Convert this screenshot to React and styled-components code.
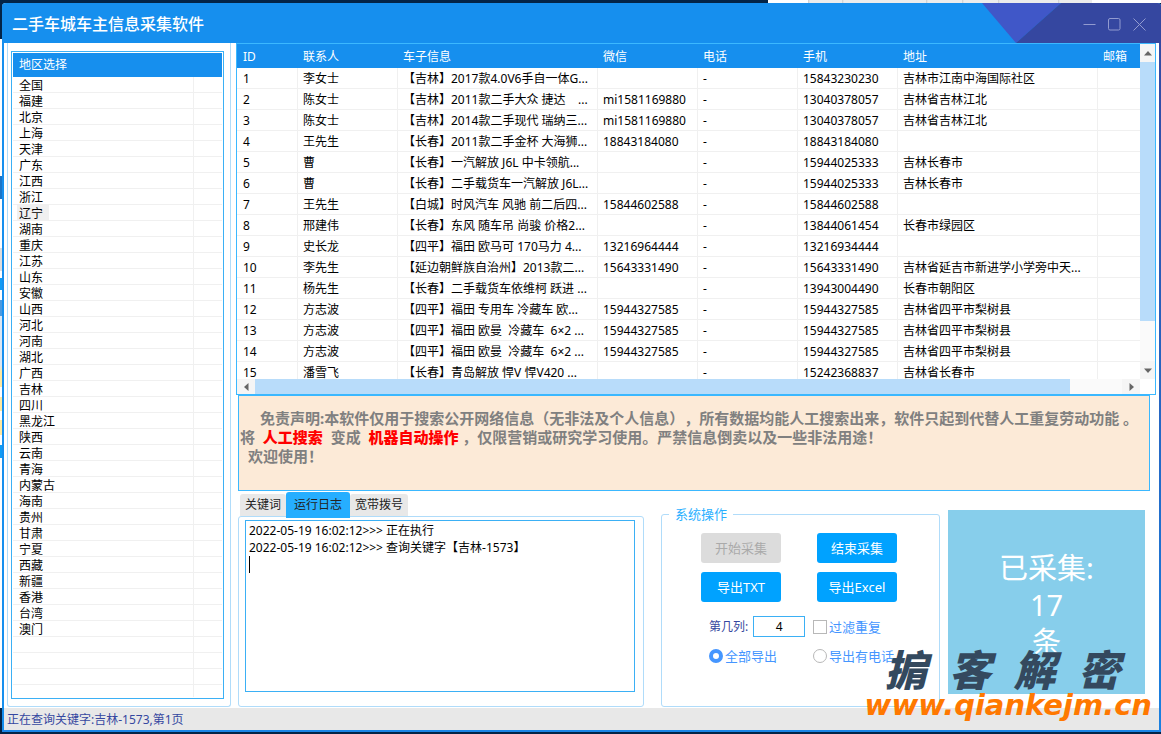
import React from "react";
import styled, { createGlobalStyle, css } from "styled-components";

const regions = [
  "全国", "福建", "北京", "上海", "天津", "广东", "江西", "浙江", "辽宁",
  "湖南", "重庆", "江苏", "山东", "安徽", "山西", "河北", "河南", "湖北",
  "广西", "吉林", "四川", "黑龙江", "陕西", "云南", "青海", "内蒙古", "海南",
  "贵州", "甘肃", "宁夏", "西藏", "新疆", "香港", "台湾", "澳门",
  "", "", "", "",
];

const columns = [
  { title: "ID", width: 61 },
  { title: "联系人", width: 100 },
  { title: "车子信息", width: 200 },
  { title: "微信", width: 100 },
  { title: "电话", width: 100 },
  { title: "手机", width: 100 },
  { title: "地址", width: 200 },
  { title: "邮箱" },
];

const rows = [
  ["1", "李女士", "【吉林】2017款4.0V6手自一体G...", "", "-", "15843230230", "吉林市江南中海国际社区"],
  ["2", "陈女士", "【吉林】2011款二手大众 捷达    ...", "mi1581169880", "-", "13040378057", "吉林省吉林江北"],
  ["3", "陈女士", "【吉林】2014款二手现代 瑞纳三...", "mi1581169880", "-", "13040378057", "吉林省吉林江北"],
  ["4", "王先生", "【长春】2011款二手金杯 大海狮...", "18843184080", "-", "18843184080", ""],
  ["5", "曹", "【长春】一汽解放 J6L 中卡领航...", "", "-", "15944025333", "吉林长春市"],
  ["6", "曹", "【长春】二手载货车一汽解放 J6L...", "", "-", "15944025333", "吉林长春市"],
  ["7", "王先生", "【白城】时风汽车 风驰 前二后四...", "15844602588", "-", "15844602588", ""],
  ["8", "邢建伟", "【长春】东风 随车吊 尚骏 价格2...", "", "-", "13844061454", "长春市绿园区"],
  ["9", "史长龙", "【四平】福田 欧马可 170马力 4...", "13216964444", "-", "13216934444", ""],
  ["10", "李先生", "【延边朝鲜族自治州】2013款二...", "15643331490", "-", "15643331490", "吉林省延吉市新进学小学旁中天..."],
  ["11", "杨先生", "【长春】二手载货车依维柯 跃进 ...", "", "-", "13943004490", "长春市朝阳区"],
  ["12", "方志波", "【四平】福田 专用车 冷藏车 欧...", "15944327585", "-", "15944327585", "吉林省四平市梨树县"],
  ["13", "方志波", "【四平】福田 欧曼  冷藏车  6×2 ...", "15944327585", "-", "15944327585", "吉林省四平市梨树县"],
  ["14", "方志波", "【四平】福田 欧曼  冷藏车  6×2 ...", "15944327585", "-", "15944327585", "吉林省四平市梨树县"],
  ["15", "潘雪飞", "【长春】青岛解放 悍V 悍V420 ...", "", "-", "15242368837", "吉林省长春市"],
];

const log =
  "2022-05-19 16:02:12>>> 正在执行\n2022-05-19 16:02:12>>> 查询关键字【吉林-1573】\n";

const App = () => {
  return (
    <Desktop>
      <GlobalStyle />
      <Window>
        <TitleBar>
          <TitleArt viewBox="0 0 179 40" aria-hidden="true">
            <polygon points="0,0 79,0 34,40" fill="#4057c8" />
            <polygon points="79,0 179,0 179,40 34,40" fill="#3547a0" />
          </TitleArt>
          <Title>二手车城车主信息采集软件</Title>
          <Controls>
            <ControlButton aria-label="最小化">
              <svg width="13" height="13" viewBox="0 0 13 13">
                <path d="M0.5 6.5H12.5" />
              </svg>
            </ControlButton>
            <ControlButton aria-label="最大化">
              <svg width="13" height="13" viewBox="0 0 13 13">
                <rect x="0.5" y="0.5" width="11.5" height="11.5" rx="1.5" />
              </svg>
            </ControlButton>
            <ControlButton aria-label="关闭">
              <svg width="13" height="13" viewBox="0 0 13 13">
                <path d="M0.5 0.5L12.5 12.5M12.5 0.5L0.5 12.5" />
              </svg>
            </ControlButton>
          </Controls>
        </TitleBar>

        <Content>
          <Sidebar>
            <RegionBox>
              <RegionHeader>地区选择</RegionHeader>
              <RegionList>
                {regions.map((name, i) => (
                  <RegionRow key={i}>
                    <RegionCell>
                      {name && (
                        <RegionName $active={name === "辽宁"}>{name}</RegionName>
                      )}
                    </RegionCell>
                  </RegionRow>
                ))}
              </RegionList>
            </RegionBox>
          </Sidebar>

          <Main>
            <GridBox>
              <GridView>
                <Table>
                  <colgroup>
                    {columns.map((c) => (
                      <col key={c.title} width={c.width} />
                    ))}
                  </colgroup>
                  <thead>
                    <tr>
                      {columns.map((c) => (
                        <Th key={c.title}>{c.title}</Th>
                      ))}
                    </tr>
                  </thead>
                  <tbody>
                    {rows.map((row) => (
                      <tr key={row[0]}>
                        {row.map((cell, i) => (
                          <Td key={i}>{cell}</Td>
                        ))}
                        <Td />
                      </tr>
                    ))}
                  </tbody>
                </Table>
              </GridView>
              <ScrollTrack $vertical>
                <ScrollArrow $vertical>
                  <svg width="8" height="5" viewBox="0 0 8 5">
                    <path d="M4 0L8 4.5H0Z" />
                  </svg>
                </ScrollArrow>
                <ScrollThumb $size={259} />
                <ScrollRest $size={40} />
                <ScrollArrow $vertical>
                  <svg width="8" height="5" viewBox="0 0 8 5">
                    <path d="M4 5L8 0.5H0Z" />
                  </svg>
                </ScrollArrow>
              </ScrollTrack>
              <ScrollTrack>
                <ScrollArrow>
                  <svg width="5" height="8" viewBox="0 0 5 8">
                    <path d="M0 4L4.5 0V8Z" />
                  </svg>
                </ScrollArrow>
                <ScrollThumb $size={815} />
                <ScrollRest $size={52} />
                <ScrollArrow>
                  <svg width="5" height="8" viewBox="0 0 5 8">
                    <path d="M5 4L0.5 0V8Z" />
                  </svg>
                </ScrollArrow>
              </ScrollTrack>
            </GridBox>

            <Notice>
              <NoticeLine $indent={20}>
                免责声明:本软件仅用于搜索公开网络信息（无非法及个人信息），所有数据均能人工搜索出来，软件只起到代替人工重复劳动功能 。
              </NoticeLine>
              <NoticeLine>
                {"将  "}
                <strong>人工搜索</strong>
                {"  变成  "}
                <strong>机器自动操作</strong>
                {" ，仅限营销或研究学习使用。严禁信息倒卖以及一些非法用途！"}
              </NoticeLine>
              <NoticeLine $indent={8}>欢迎使用！</NoticeLine>
            </Notice>

            <Bottom>
              <TabArea>
                <TabStrip role="tablist">
                  <Tab role="tab">关键词</Tab>
                  <Tab role="tab" $active aria-selected="true">
                    运行日志
                  </Tab>
                  <Tab role="tab">宽带拨号</Tab>
                </TabStrip>
                <TabPanel>
                  <LogWrap>
                    <Log aria-label="运行日志" defaultValue={log} spellCheck={false} />
                    <Caret />
                  </LogWrap>
                </TabPanel>
              </TabArea>

              <Group>
                <legend>系统操作</legend>
                <ButtonGrid>
                  <ActionButton disabled>开始采集</ActionButton>
                  <ActionButton>结束采集</ActionButton>
                  <ActionButton>导出TXT</ActionButton>
                  <ActionButton>导出Excel</ActionButton>
                </ButtonGrid>
                <Options>
                  <ColumnField>
                    <label htmlFor="column">第几列:</label>
                    <input id="column" type="text" defaultValue="4" />
                  </ColumnField>
                  <Option>
                    <Check type="checkbox" />
                    过滤重复
                  </Option>
                  <Option>
                    <Radio type="radio" name="scope" defaultChecked />
                    全部导出
                  </Option>
                  <Option>
                    <Radio type="radio" name="scope" />
                    导出有电话
                  </Option>
                </Options>
              </Group>

              <Counter>
                <div>已采集:</div>
                <div>17</div>
                <div>条</div>
              </Counter>
            </Bottom>
          </Main>
        </Content>

        <StatusBar>正在查询关键字:吉林-1573,第1页</StatusBar>
      </Window>

      <Watermark>
        <WatermarkName>
          <span>掮</span>
          <span>客</span>
          <span>解</span>
          <span>密</span>
        </WatermarkName>
        <WatermarkSite>www.qiankejm.cn</WatermarkSite>
      </Watermark>
    </Desktop>
  );
};

export default App;

const GlobalStyle = createGlobalStyle`
  * {
    box-sizing: border-box;
  }
  body {
    margin: 0;
    background: #032447;
    color: #000;
    font-family: "Noto Sans", "Noto Sans CJK SC", sans-serif;
    font-size: 12px;
    line-height: 16px;
    text-spacing-trim: space-all;
  }
  button, input, textarea {
    font: inherit;
    margin: 0;
  }
`;

/* slivers of other windows show round the edges */
const Desktop = styled.div`
  position: relative;
  display: flex;
  height: 100vh;
  min-height: 640px;
  padding: 3px 0 2px 2px;
  background:
    linear-gradient(
        90deg,
        #032447 768px, #fff 768px, #fff 808px,
        #ccc 808px, #ececec 810px, #ececec 842px,
        #ccc 842px, #ececec 844px, #ececec 926px,
        #ccc 926px, #ececec 928px, #ececec 962px,
        #ccc 962px, #ececec 964px, #ececec 998px,
        #ccc 998px, #ececec 1000px, #ececec 1058px,
        #ccc 1058px, #ececec 1060px, #ececec 1092px,
        #fff 1092px
      )
      top / 100% 3px no-repeat,
    linear-gradient(
        #032447 39px, #fff 39px, #fff 176px,
        #1a75c8 176px, #1a75c8 199px, #fff 199px, #fff 248px,
        #ddd 248px, #ddd 271px, #fff 271px, #fff 278px,
        #0f9cf5 278px, #0f9cf5 290px, #fff 290px, #fff 300px,
        #4a9ae0 300px, #4a9ae0 316px, #dbe8f4 316px, #dbe8f4 365px,
        #ffe9a0 372px, #ffe9a0 387px, #fff 387px, #fff 397px,
        #ffe9a0 397px, #ffe9a0 411px, #fff 411px, #fff 420px,
        #ffe9a0 420px, #ffe9a0 435px, #fff 435px, #fff 445px,
        #0f9cf5 445px, #0f9cf5 458px, #fff 458px, #fff 708px,
        #032447 708px
      )
      left / 5px 100% no-repeat,
    #032447;
`;

const Window = styled.div`
  flex: 1;
  min-width: 0;
  display: flex;
  flex-direction: column;
  overflow: hidden;
  border-radius: 4px 4px 0 0;
  border-bottom: 2px solid #1a85e6;
  background:
    linear-gradient(#3547a0, #1a80e0) right / 2px 100% no-repeat,
    linear-gradient(#168fee, #168fee) left / 2px 100% no-repeat,
    #fff;
`;

const TitleBar = styled.header`
  position: relative;
  flex: none;
  display: flex;
  align-items: center;
  justify-content: space-between;
  height: 40px;
  padding: 2px 9px 0 10px;
  background: #168fee;
`;

const TitleArt = styled.svg`
  position: absolute;
  top: 0;
  right: 0;
  width: 179px;
  height: 40px;
`;

const Title = styled.h1`
  margin: 0;
  font-size: 16px;
  line-height: 24px;
  font-weight: 500;
  color: #fff;
`;

const Controls = styled.div`
  position: relative;
  display: flex;
`;

const ControlButton = styled.button`
  display: flex;
  align-items: center;
  justify-content: center;
  width: 25px;
  height: 25px;
  padding: 0;
  border: 0;
  background: none;

  svg {
    fill: none;
    stroke: #929bd0;
    stroke-width: 1;
  }
`;

const Content = styled.div`
  flex: 1;
  min-height: 0;
  display: flex;
  gap: 5px;
  padding: 0 5px;
`;

const Sidebar = styled.aside`
  flex: none;
  display: flex;
  width: 224px;
  margin-bottom: 1px;
  padding: 8px 6px 7px 3px;
  border: 1px solid #b0dcfa;
  border-top: 0;
  border-radius: 0 0 3px 3px;
`;

const RegionBox = styled.div`
  flex: 1;
  display: flex;
  flex-direction: column;
  padding: 1px;
  border: 1px solid #3bb0f5;
`;

const RegionHeader = styled.div`
  flex: none;
  padding: 0 6px;
  line-height: 24px;
  background: #168fee;
  color: #fff;
`;

const RegionList = styled.ul`
  flex: 1;
  min-height: 0;
  margin: 0;
  padding: 0;
  overflow: hidden;
  list-style: none;
`;

const RegionRow = styled.li`
  height: 16px;
  border-bottom: 1px solid #f0f0f0;
`;

const RegionCell = styled.div`
  display: flex;
  width: 181px;
  height: 16px;
  padding-left: 4px;
  border-right: 1px solid #f0f0f0;
`;

const RegionName = styled.span`
  padding: 0 6px 0 2px;
  line-height: 18px;
  background: ${(p) => (p.$active ? "#f0f0f0" : "none")};
`;

const Main = styled.main`
  flex: 1;
  min-width: 0;
  display: flex;
  flex-direction: column;
`;

const GridBox = styled.div`
  flex: 1;
  min-height: 0;
  display: grid;
  grid-template-columns: minmax(0, 1fr) 15px;
  grid-template-rows: minmax(0, 1fr) 15px;
  border: 1px solid #3bb8ff;
`;

const GridView = styled.div`
  min-height: 0;
  overflow: hidden;
`;

const Table = styled.table`
  width: 100%;
  table-layout: fixed;
  border-collapse: separate;
  border-spacing: 0;
`;

const cell = css`
  overflow: hidden;
  padding: 2px 0 0 5px;
  text-align: left;
  white-space: pre;

  &:first-child {
    padding-left: 6px;
  }
`;

const Th = styled.th`
  ${cell}
  height: 24px;
  font-weight: 400;
  background: #168fee;
  color: #fff;
`;

const Td = styled.td`
  ${cell}
  height: 21px;
  border-right: 1px solid #f0f0f0;
  border-bottom: 1px solid #f0f0f0;

  &:last-child {
    border-right: 0;
  }
`;

const ScrollTrack = styled.div`
  display: flex;
  min-width: 0;
  min-height: 0;
  flex-direction: ${(p) => (p.$vertical ? "column" : "row")};
  background: #fafafa;
`;

const ScrollArrow = styled.div`
  flex: none;
  display: flex;
  align-items: center;
  justify-content: center;
  width: ${(p) => (p.$vertical ? "15px" : "18px")};
  height: ${(p) => (p.$vertical ? "18px" : "15px")};
  background: #f5f5f5;

  svg {
    fill: #666;
  }
`;

const ScrollThumb = styled.div`
  flex: ${(p) => p.$size} 1 0;
  background: #b8dcfa;
`;

const ScrollRest = styled.div`
  flex: ${(p) => p.$size} 1 0;
`;

const Notice = styled.section`
  flex: none;
  min-height: 96px;
  margin: 0 6px 0 2px;
  padding: 13px 1px;
  border: 1px solid #3bb8ff;
  background: #fcead7;
  color: #808080;
  font-size: 15px;
  line-height: 19px;
  font-weight: 700;
`;

const NoticeLine = styled.p`
  margin: 0;
  padding-left: ${(p) => p.$indent || 0}px;
  white-space: pre-wrap;

  strong {
    color: #f00;
  }
`;

const Bottom = styled.div`
  flex: none;
  display: grid;
  grid-template-columns: minmax(0, 1fr) 279px 205px;
  height: 217px;
  padding: 1px 11px 1px 2px;
`;

const TabArea = styled.section`
  display: flex;
  flex-direction: column;
  margin-right: 17px;
`;

const TabStrip = styled.div`
  display: flex;
  align-items: flex-end;
  height: 24px;
  padding-left: 2px;
`;

const Tab = styled.button`
  height: 22px;
  padding: 0 5px;
  border: 0;
  border-radius: 3px 3px 0 0;
  background: #e8e8e8;
  color: #222;

  ${(p) =>
    p.$active &&
    css`
      position: relative;
      height: 26px;
      margin-bottom: -2px;
      padding: 0 8px;
      background: #26aeff;
    `}
`;

const TabPanel = styled.div`
  flex: 1;
  display: flex;
  padding: 3px 8px 14px 6px;
  border: 1px solid #b0dcfa;
  border-radius: 3px;
`;

const LogWrap = styled.div`
  position: relative;
  flex: 1;
  display: flex;
`;

const Log = styled.textarea`
  flex: 1;
  min-width: 0;
  padding: 1px 3px;
  border: 1px solid #3bb0f5;
  outline: 0;
  resize: none;
  line-height: 17px;
  color: #000;
`;

const Caret = styled.span`
  position: absolute;
  top: 36px;
  left: 4px;
  width: 1px;
  height: 17px;
  background: #000;
`;

const Group = styled.fieldset`
  min-width: 0;
  margin: 14px 0 0;
  padding: 11px 0 0 39px;
  border: 1px solid #b0dcfa;
  border-radius: 3px;

  legend {
    margin-left: -32px;
    padding: 0 6px;
    font-size: 13px;
    line-height: 16px;
    color: #2ab0ff;
  }
`;

const ButtonGrid = styled.div`
  display: grid;
  grid-template-columns: 80px 80px;
  gap: 9px 36px;
`;

const ActionButton = styled.button`
  height: 30px;
  padding: 0;
  border: 0;
  border-radius: 3px;
  background: #00a2ff;
  color: #fff;
  font-size: 13px;

  &:disabled {
    background: #dcdcdc;
    color: #aaa;
  }
`;

const Options = styled.div`
  display: grid;
  grid-template-columns: 104px auto;
  grid-auto-rows: 21px;
  align-items: center;
  row-gap: 8px;
  margin-top: 14px;
  padding-left: 8px;
`;

const ColumnField = styled.div`
  display: flex;
  align-items: center;
  gap: 5px;
  color: #3547a0;

  input {
    width: 52px;
    height: 21px;
    padding: 0;
    border: 1px solid #3bb0f5;
    text-align: center;
    color: #000;
  }
`;

const Option = styled.label`
  display: flex;
  align-items: center;
  gap: 2px;
  font-size: 13px;
  line-height: 20px;
  white-space: nowrap;
  color: #4596ff;
`;

const Check = styled.input`
  appearance: none;
  width: 14px;
  height: 14px;
  border: 1px solid #b8b8b8;
  background: #fff;
`;

const Radio = styled(Check)`
  border-radius: 50%;

  &:checked {
    border: 4px solid #4596ff;
  }
`;

const Counter = styled.section`
  display: flex;
  flex-direction: column;
  justify-content: center;
  height: 184px;
  margin: 18px 0 0 8px;
  padding-top: 4px;
  background: #87ceeb;
  color: #fff;
  font-size: 29px;
  line-height: 37px;
  text-align: center;
`;

const StatusBar = styled.footer`
  flex: none;
  height: 22px;
  margin: 0 2px;
  padding: 0 3px;
  line-height: 24px;
  background: #e8e8e8;
  color: #3547a0;
`;

const Watermark = styled.div`
  position: absolute;
  right: 9px;
  bottom: 14px;
  font-style: italic;
  pointer-events: none;
`;

const WatermarkName = styled.div`
  display: flex;
  justify-content: space-between;
  padding: 0 32px 0 20px;
  font-family: "Noto Sans CJK SC", sans-serif;
  font-size: 42px;
  line-height: 44px;
  font-weight: 900;
  color: #34495e;
`;

const WatermarkSite = styled.div`
  font-family: "DejaVu Sans", sans-serif;
  font-size: 29px;
  line-height: 30px;
  font-weight: 700;
  color: #ff7800;
`;
